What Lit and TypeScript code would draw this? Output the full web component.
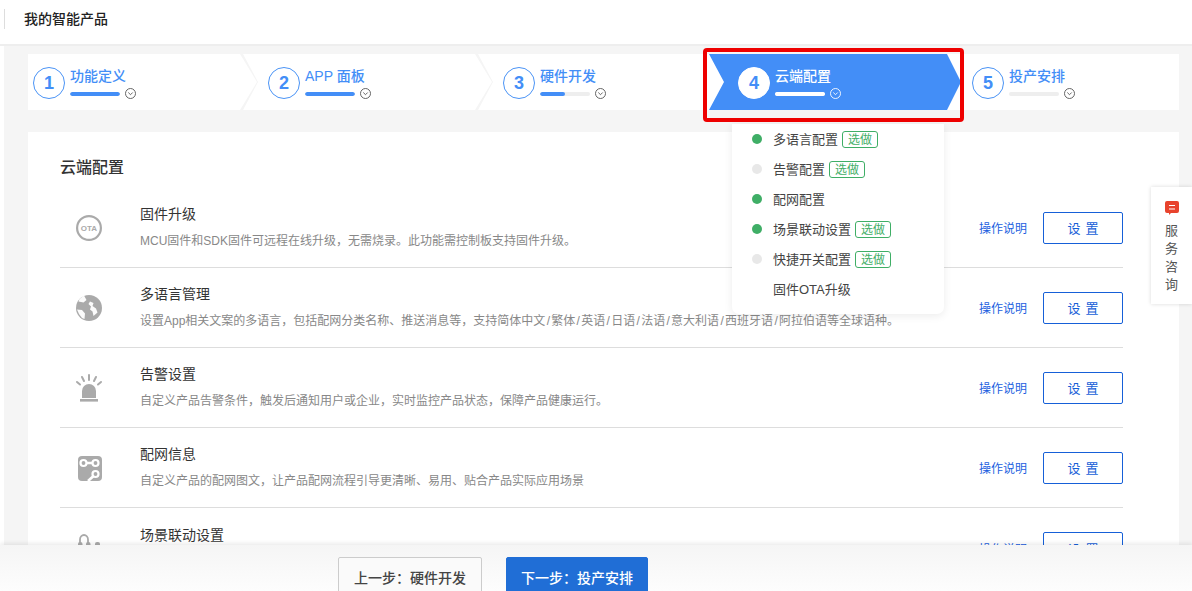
import { LitElement, html, css, svg } from "lit";
import { customElement } from "lit/decorators.js";

const steps = [
  { n: 1, label: "功能定义", pct: 100 },
  { n: 2, label: "APP 面板", pct: 100 },
  { n: 3, label: "硬件开发", pct: 50 },
  { n: 4, label: "云端配置", pct: 100, active: true },
  { n: 5, label: "投产安排", pct: 0 },
];

const menu = [
  { t: "多语言配置", d: "g", tag: true },
  { t: "告警配置", d: "e", tag: true },
  { t: "配网配置", d: "g", tag: false },
  { t: "场景联动设置", d: "g", tag: true },
  { t: "快捷开关配置", d: "e", tag: true },
  { t: "固件OTA升级", d: "", tag: false },
];

const icons = {
  ota: svg`<circle cx="14" cy="14" r="11.900" fill="none" stroke="#aaa" stroke-width="2.200"/><text x="14" y="16.900" text-anchor="middle" font-size="8" font-weight="700" fill="#aaa" font-family="Liberation Sans">OTA</text>`,
  globe: svg`<circle cx="14" cy="14" r="13" fill="#aaa"/><path d="M9 1.500l2.500 4.500-3 2.500-5-1 1-2.500zM2 15.500l5 .5 3 3.500-.5 5.500-2.500-1-3-4zM15 7.500l3.500 1.500-1 3 3.500 2.500 1.500 4-4 3.500-1-4.500-2.500-2 1-3-2.500-2.500z" fill="#fff" opacity="0.95"/>`,
  alarm: svg`<path d="M7 24v-7a7 7 0 0 1 14 0v7z" fill="#aaa"/><rect x="5" y="25" width="18" height="2.600" fill="#aaa"/><path d="M14 1v5M7 3l2 4M21 3l-2 4M2 8l3 2.500M26 8l-3 2.500" stroke="#aaa" stroke-width="2" stroke-linecap="round"/>`,
  chain: svg`<rect x="3" y="2" width="24" height="25" rx="4" fill="#aaa"/><circle cx="8.500" cy="9" r="3" fill="none" stroke="#fff" stroke-width="2.200"/><circle cx="20.500" cy="9" r="3" fill="none" stroke="#fff" stroke-width="2.200"/><circle cx="20.500" cy="20" r="3" fill="none" stroke="#fff" stroke-width="2.200"/><path d="M11 9h7M18.500 22l-5.500 5" stroke="#fff" stroke-width="2.600"/>`,
  head: svg`<path d="M5 9V5.500a4 4.500 0 0 1 8 0V9" fill="none" stroke="#aaa" stroke-width="1.800"/><rect x="3" y="8" width="4.500" height="14" rx="2" fill="#aaa"/><rect x="11" y="8" width="4.500" height="14" rx="2" fill="#aaa"/><rect x="20" y="8" width="5" height="14" rx="2" fill="#aaa"/>`,
};

const rows = [
  { i: icons.ota, t: "固件升级", d: "MCU固件和SDK固件可远程在线升级，无需烧录。此功能需控制板支持固件升级。" },
  { i: icons.globe, t: "多语言管理", d: "设置App相关文案的多语言，包括配网分类名称、推送消息等，支持简体中文/繁体/英语/日语/法语/意大利语/西班牙语/阿拉伯语等全球语种。" },
  { i: icons.alarm, t: "告警设置", d: "自定义产品告警条件，触发后通知用户或企业，实时监控产品状态，保障产品健康运行。" },
  { i: icons.chain, t: "配网信息", d: "自定义产品的配网图文，让产品配网流程引导更清晰、易用、贴合产品实际应用场景" },
  { i: icons.head, t: "场景联动设置", d: "设置产品可执行的场景联动条件与动作，让设备之间协同工作" },
];

@customElement("app-root")
export class AppRoot extends LitElement {
  static styles = css`
    :host {
      display: block;
      font-family: "Liberation Sans", "Noto Sans CJK SC", sans-serif;
      color: #333;
    }
    .page {
      position: relative;
      width: 1192px;
      height: 591px;
      overflow: hidden;
      background: #f5f5f5;
    }
    .top {
      height: 44px;
      background: #fff;
      border-bottom: 2px solid #eee;
      display: flex;
      align-items: center;
      box-sizing: content-box;
    }
    .top-title {
      margin-left: 4px;
      padding-left: 19px;
      border-left: 1px solid #ddd;
      height: 20px;
      line-height: 20px;
      font-size: 14px;
      font-weight: 500;
      color: #222;
      margin-top: -6px;
    }
    .body {
      display: flex;
      height: 545px;
    }
    .strip {
      width: 4px;
      background: #fff;
      flex: none;
    }
    .content {
      flex: 1;
      padding: 8px 13px 0 24px;
      min-width: 0;
    }
    .steps {
      display: flex;
      height: 56px;
    }
    .step {
      position: relative;
      flex: none;
      width: 249px;
      margin-left: -14px;
      height: 56px;
      background: #fff;
      clip-path: polygon(0 0, 232px 0, 100% 50%, 232px 100%, 0 100%, 15px 50%);
      display: flex;
      align-items: center;
      box-sizing: border-box;
      padding-left: 25px;
    }
    .step.first {
      margin-left: 0;
      width: 229px;
      padding-left: 5px;
      clip-path: polygon(0 0, 212px 0, 100% 50%, 212px 100%, 0 100%);
    }
    .step.last {
      flex: 1;
      clip-path: none;
      margin-left: -14px;
      padding-left: 28px;
    }
    .step.active {
      width: 252px;
      margin-left: -18px;
      margin-right: -3px;
      padding-left: 29px;
      background: #438ef7;
      clip-path: polygon(0 0, 238px 0, 100% 50%, 238px 100%, 0 100%, 15px 50%);
      z-index: 1;
    }
    .num {
      width: 32px;
      height: 32px;
      box-sizing: border-box;
      border: 1px solid #4a93f5;
      border-radius: 50%;
      color: #438ef7;
      font-size: 18px;
      font-weight: 700;
      display: flex;
      align-items: center;
      justify-content: center;
      flex: none;
      margin-right: 5px;
      margin-top: 2px;
    }
    .step.active .num {
      background: #fff;
      border-color: #fff;
    }
    .info {
      display: flex;
      flex-direction: column;
      gap: 2px;
      margin-top: 1px;
    }
    .label {
      font-size: 14px;
      line-height: 20px;
      font-weight: 500;
      color: #438ef7;
    }
    .step.active .label {
      color: #fff;
    }
    .prog-line {
      display: flex;
      align-items: center;
      gap: 5px;
      height: 11px;
    }
    .bar {
      width: 50px;
      height: 4px;
      border-radius: 2px;
      background: #eee;
      overflow: hidden;
    }
    .fill {
      height: 100%;
      background: #438ef7;
      border-radius: 2px;
    }
    .step.active .fill {
      background: #fff;
    }
    .chev {
      display: block;
      flex: none;
      stroke: #555;
    }
    .step.active .chev {
      stroke: #fff;
    }
    .redbox {
      position: absolute;
      left: 703px;
      top: 48px;
      width: 261px;
      height: 74px;
      box-sizing: border-box;
      border: 4px solid #ee0000;
      border-radius: 4px;
      z-index: 5;
      pointer-events: none;
    }
    .card {
      margin-top: 22px;
      background: #fff;
      padding: 24px 56px 0 32px;
      height: 500px;
    }
    .card h2 {
      margin: 0 0 8px;
      font-size: 16px;
      line-height: 24px;
      font-weight: 500;
      color: #333;
    }
    .row {
      height: 80px;
      box-sizing: border-box;
      border-bottom: 1px solid #ddd;
      display: flex;
      align-items: center;
    }
    .row:last-child {
      border-bottom: 0;
    }
    .ico {
      width: 28px;
      height: 28px;
      margin: 0 37px 0 15px;
      flex: none;
      display: block;
    }
    .txt {
      flex: 1;
      min-width: 0;
    }
    .t {
      font-size: 14px;
      line-height: 20px;
      color: #333;
    }
    .d {
      font-size: 12px;
      line-height: 20px;
      margin-top: 7px;
      color: #888;
      white-space: nowrap;
    }
    .sl {
      padding: 0 1.300px;
    }
    .link {
      font-size: 12px;
      color: #1c5fe0;
      margin-right: 16px;
      flex: none;
    }
    .btn {
      width: 80px;
      height: 32px;
      box-sizing: border-box;
      border: 1px solid #1660d8;
      border-radius: 2px;
      color: #1660d8;
      font-size: 13px;
      display: flex;
      align-items: center;
      justify-content: center;
      flex: none;
      background: #fff;
      letter-spacing: 0.4em;
      text-indent: 0.4em;
    }
    .menu {
      position: absolute;
      left: 732px;
      top: 124px;
      width: 212px;
      height: 190px;
      box-sizing: border-box;
      background: #fff;
      border-radius: 0 0 7px 7px;
      box-shadow: 0 2px 8px rgba(0, 0, 0, 0.08);
      z-index: 4;
    }
    .mi {
      height: 30px;
      display: flex;
      align-items: center;
      font-size: 13px;
      color: #444;
    }
    .mt {
      margin-bottom: 2px;
    }
    .dot {
      width: 10px;
      height: 10px;
      border-radius: 50%;
      margin: 0 11px 0 20px;
      flex: none;
    }
    .dot.g {
      background: #3fae66;
    }
    .dot.e {
      background: #e8e8e8;
    }
    .tag {
      margin-left: 4px;
      height: 17px;
      box-sizing: border-box;
      border: 1px solid #3fae66;
      border-radius: 3px;
      padding: 0 5px;
      font-size: 12px;
      line-height: 17px;
      color: #3fae66;
    }
    .side {
      position: absolute;
      right: 0;
      top: 187px;
      width: 41px;
      height: 117px;
      background: #fff;
      box-shadow: 0 0 4px rgba(0, 0, 0, 0.15);
      display: flex;
      flex-direction: column;
      align-items: center;
      padding-top: 13px;
      box-sizing: border-box;
      z-index: 3;
    }
    .side span {
      font-size: 13px;
      line-height: 18px;
      color: #555;
    }
    .side svg {
      display: block;
      margin-bottom: 6px;
    }
    .foot {
      position: absolute;
      left: 0;
      right: 0;
      bottom: 0;
      height: 46px;
      background: linear-gradient(#f5f5f5, #fdfdfd);
      box-shadow: 0 -2px 4px rgba(0, 0, 0, 0.08);
      display: flex;
      gap: 24px;
      padding: 12px 0 0 338px;
      box-sizing: border-box;
      z-index: 6;
    }
    .fb {
      width: 144px;
      height: 44px;
      box-sizing: border-box;
      border: 1px solid #ccc;
      border-radius: 2px;
      background: #fafafa;
      font-size: 14px;
      line-height: 40px;
      text-align: center;
      color: #444;
      font-weight: 500;
    }
    .fb.primary {
      width: 142px;
      background: #206ed6;
      border-color: #206ed6;
      color: #fff;
    }
  `;

  chev() {
    return html`<svg class="chev" width="11" height="11" viewBox="0 0 11 11" fill="none" stroke-width="0.9"><circle cx="5.500" cy="5.500" r="5"/><path d="M3.300 4.500l2.200 2.200 2.200-2.200"/></svg>`;
  }

  desc(text: string) {
    const parts = text.split("/");
    return parts.map((p, i) => (i === 0 ? p : html`<span class="sl">/</span>${p}`));
  }

  render() {
    return html`<div class="page">
      <div class="top"><div class="top-title">我的智能产品</div></div>
      <div class="body">
        <div class="strip"></div>
        <div class="content">
          <div class="steps">
            ${steps.map(
              (s, i) => html`<div class="step ${i === 0 ? "first" : ""} ${s.active ? "active" : ""} ${i === 4 ? "last" : ""}">
                <div class="num">${s.n}</div>
                <div class="info">
                  <div class="label">${s.label}</div>
                  <div class="prog-line">
                    <div class="bar"><div class="fill" style="width:${s.pct}%"></div></div>
                    ${this.chev()}
                  </div>
                </div>
              </div>`
            )}
          </div>
          <div class="card">
            <h2>云端配置</h2>
            ${rows.map(
              (r) => html`<div class="row">
                <svg class="ico" viewBox="0 0 28 28">${r.i}</svg>
                <div class="txt"><div class="t">${r.t}</div><div class="d">${this.desc(r.d)}</div></div>
                <div class="link">操作说明</div>
                <div class="btn">设置</div>
              </div>`
            )}
          </div>
        </div>
      </div>
      <div class="redbox"></div>
      <div class="menu">
        ${menu.map(
          (m) => html`<div class="mi">
            <div class="dot ${m.d}"></div>
            <span class="mt">${m.t}</span>
            ${m.tag ? html`<span class="tag">选做</span>` : ""}
          </div>`
        )}
      </div>
      <div class="side">
        <svg width="16" height="16" viewBox="0 0 16 16"><path d="M3 1h10a2 2 0 0 1 2 2v8a2 2 0 0 1-2 2H7l-2 2v-2H3a2 2 0 0 1-2-2V3a2 2 0 0 1 2-2z" fill="#e8432d"/><path d="M5 5.500h6M5 9h6" stroke="#fff" stroke-width="1.200"/></svg>
        <span>服</span><span>务</span><span>咨</span><span>询</span>
      </div>
      <div class="foot">
        <div class="fb">上一步：硬件开发</div>
        <div class="fb primary">下一步：投产安排</div>
      </div>
    </div>`;
  }
}
